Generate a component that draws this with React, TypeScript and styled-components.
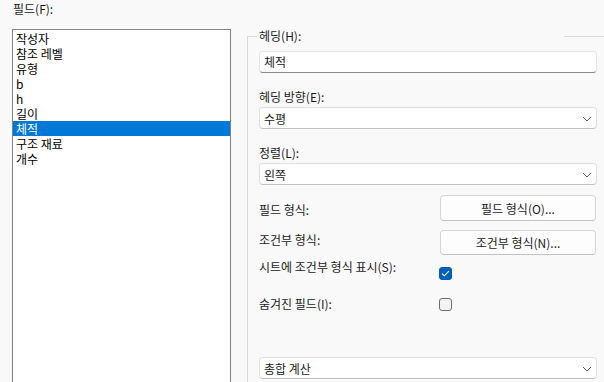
import React from "react"
import styled, { createGlobalStyle } from "styled-components"

const GlobalStyle = createGlobalStyle`
  html, body {
    margin: 0;
    background: #f9f9f9;
    overflow: hidden;
  }
  body {
    font-family: "Noto Sans CJK KR", "Noto Sans", sans-serif;
    font-size: 12px;
    color: #1b1b1b;
  }
`

const fields = ["작성자", "참조 레벨", "유형", "b", "h", "길이", "체적", "구조 재료", "개수"]

const Chevron: React.FC = () => (
  <svg width="10" height="6" viewBox="0 0 10 6">
    <path d="M1 1 L5 5 L9 1" fill="none" stroke="#5f5f5f" strokeWidth="1" />
  </svg>
)

const Check: React.FC = () => (
  <svg width="9" height="7" viewBox="0 0 9 7">
    <path d="M1 3.6 L3.3 5.8 L8 1.2" fill="none" stroke="#ffffff" strokeWidth="1.1" />
  </svg>
)

export default function App() {
  return (
    <S.Page>
      <GlobalStyle />
      <S.LeftPane>
        <S.Caption>필드(F):</S.Caption>
        <S.List>
          {fields.map((f) => (
            <S.Item key={f} selected={f === "체적"}>
              {f}
            </S.Item>
          ))}
        </S.List>
      </S.LeftPane>

      <S.RightPane>
        <S.Group>
          <S.Legend>헤딩(H):</S.Legend>
          <S.TextBox>체적</S.TextBox>

          <S.Label top={16}>헤딩 방향(E):</S.Label>
          <S.Select>
            <span>수평</span>
            <Chevron />
          </S.Select>

          <S.Label top={16}>정렬(L):</S.Label>
          <S.Select>
            <span>왼쪽</span>
            <Chevron />
          </S.Select>

          <S.Row top={10}>
            <S.RowLabel offset={7}>필드 형식:</S.RowLabel>
            <S.Button height={26}>필드 형식(O)...</S.Button>
          </S.Row>
          <S.Row top={9}>
            <S.RowLabel offset={2}>조건부 형식:</S.RowLabel>
            <S.Button height={25}>조건부 형식(N)...</S.Button>
          </S.Row>
          <S.Row top={4}>
            <S.RowLabel offset={0}>시트에 조건부 형식 표시(S):</S.RowLabel>
            <S.CheckBox checked offset={8}>
              <Check />
            </S.CheckBox>
          </S.Row>
          <S.Row top={16}>
            <S.RowLabel offset={0}>숨겨진 필드(I):</S.RowLabel>
            <S.CheckBox offset={2} />
          </S.Row>

          <S.Select style={{ marginTop: 45 }}>
            <span>총합 계산</span>
            <Chevron />
          </S.Select>
        </S.Group>
      </S.RightPane>
    </S.Page>
  )
}

const S = {
  Page: styled.div`
    display: flex;
    height: 382px;
    overflow: hidden;
  `,
  LeftPane: styled.div`
    display: flex;
    flex-direction: column;
    flex-shrink: 0;
    width: 219px;
    margin-left: 12px;
  `,
  Caption: styled.div`
    line-height: 16px;
    margin-top: 1px;
    padding-left: 1px;
  `,
  List: styled.ul`
    list-style: none;
    margin: 12px 0 0;
    padding: 1px 0;
    height: 420px;
    flex-shrink: 0;
    background: #ffffff;
    border: 1px solid #828282;
  `,
  Item: styled.li<{ selected?: boolean }>`
    height: 15px;
    line-height: 15px;
    padding-left: 3px;
    white-space: nowrap;
    background: ${(p) => (p.selected ? "#0078d7" : "transparent")};
    color: ${(p) => (p.selected ? "#ffffff" : "#000000")};
  `,
  RightPane: styled.div`
    flex: 1;
    margin-left: 16px;
    padding-top: 28px;
  `,
  Group: styled.fieldset`
    margin: 0;
    padding: 0 7px 0 11px;
    min-height: 400px;
    border: none;
    border-top: 1px solid #d9d9d9;
    border-left: 1px solid #d9d9d9;
    display: flex;
    flex-direction: column;
  `,
  Legend: styled.legend`
    box-sizing: border-box;
    width: 307px;
    margin-left: -2px;
    padding: 0 2px;
    line-height: 16px;
  `,
  TextBox: styled.div`
    box-sizing: border-box;
    height: 22px;
    margin-top: 7px;
    padding-left: 4px;
    line-height: 20px;
    background: #ffffff;
    border: 1px solid #e3e3e3;
    border-bottom-color: #8a8a8a;
    border-radius: 4px;
  `,
  Label: styled.div<{ top: number }>`
    margin-top: ${(p) => p.top}px;
    line-height: 16px;
  `,
  Select: styled.div`
    box-sizing: border-box;
    height: 22px;
    margin-top: 2px;
    padding: 0 4px 0 4px;
    display: flex;
    align-items: center;
    justify-content: space-between;
    background: #ffffff;
    border: 1px solid #e0e0e0;
    border-bottom-color: #c2c2c2;
    border-radius: 4px;
    svg {
      margin-top: 1px;
    }
  `,
  Row: styled.div<{ top: number }>`
    display: grid;
    grid-template-columns: 181px 156px;
    align-items: start;
    margin-top: ${(p) => p.top}px;
  `,
  RowLabel: styled.div<{ offset: number }>`
    margin-top: ${(p) => p.offset}px;
    line-height: 16px;
    white-space: nowrap;
  `,
  Button: styled.div<{ height: number }>`
    box-sizing: border-box;
    height: ${(p) => p.height}px;
    display: flex;
    align-items: center;
    justify-content: center;
    background: #fdfdfd;
    border: 1px solid #d6d6d6;
    border-bottom-color: #c2c2c2;
    border-radius: 4px;
  `,
  CheckBox: styled.div<{ checked?: boolean; offset: number }>`
    box-sizing: border-box;
    width: 13px;
    height: 13px;
    margin-left: -1px;
    margin-top: ${(p) => p.offset}px;
    display: flex;
    align-items: center;
    justify-content: center;
    border-radius: 3px;
    background: ${(p) => (p.checked ? "#005fb8" : "#f3f3f3")};
    border: 1px solid ${(p) => (p.checked ? "#005fb8" : "#6e6e6e")};
  `,
}
